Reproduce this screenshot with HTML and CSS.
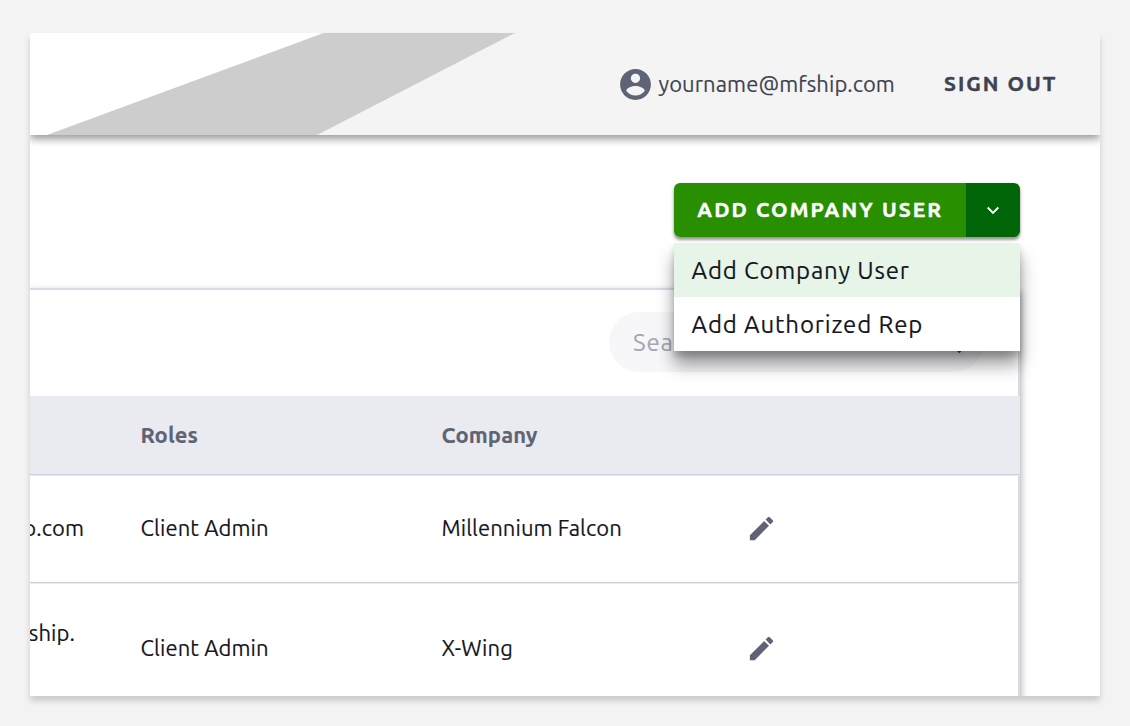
FILE: index.html
```html
<!DOCTYPE html>
<html lang="en">
<head>
<meta charset="UTF-8">
<meta name="viewport" content="width=device-width, initial-scale=1.0"/>
<title>Company Users</title>
<link rel="stylesheet" href="styles.css">
</head>
<body>
<div class="frame">
  <header class="header">
    <svg class="header-bg" viewBox="0 0 1070 102" width="1070" height="102">
      <polygon points="0,0 293.500,0 17,102 0,102" fill="#fff"/>
      <polygon points="293.500,0 485,0 287,102 17,102" fill="#cdcdcd"/>
    </svg>
    <div class="account">
      <svg width="37" height="37" viewBox="0 0 24 24" fill="#5e6475"><path d="M12 2C6.480 2 2 6.480 2 12s4.480 10 10 10 10-4.480 10-10S17.520 2 12 2zm0 3c1.660 0 3 1.340 3 3s-1.340 3-3 3-3-1.340-3-3 1.340-3 3-3zm0 14.200c-2.500 0-4.710-1.280-6-3.220.030-1.990 4-3.080 6-3.080 1.990 0 5.970 1.090 6 3.080-1.290 1.940-3.500 3.220-6 3.220z"/></svg>
      <span class="email">yourname@mfship.com</span>
    </div>
    <a class="sign-out">SIGN OUT</a>
  </header>

  <main class="main">
    <div class="actions">
      <div class="split-button">
        <button class="add">ADD COMPANY USER</button>
        <button class="toggle"><svg width="14" height="9" viewBox="0 0 14 9"><path d="M1.700 1.500 7 6.800l5.300-5.300" fill="none" stroke="#fff" stroke-width="1.900"/></svg></button>
        <div class="menu">
          <div class="menu-item active">Add Company User</div>
          <div class="menu-item">Add Authorized Rep</div>
        </div>
      </div>
    </div>

    <section class="card">
      <div class="toolbar">
        <div class="search">
          <span>Search</span>
          <svg width="32" height="32" viewBox="0 0 24 24" fill="#3f4350"><path d="M15.500 14h-.79l-.28-.27A6.470 6.470 0 0 0 16 9.500 6.500 6.500 0 1 0 9.500 16c1.610 0 3.090-.59 4.230-1.570l.27.28v.79l5 4.990L20.490 19l-4.990-5zm-6 0C7.010 14 5 11.990 5 9.500S7.010 5 9.500 5 14 7.010 14 9.500 11.990 14 9.500 14z"/></svg>
        </div>
      </div>
      <div class="row head">
        <div class="cell cell-email"></div>
        <div class="cell cell-roles">Roles</div>
        <div class="cell cell-company">Company</div>
      </div>
      <div class="row short">
        <div class="cell cell-email">p.com</div>
        <div class="cell cell-roles">Client Admin</div>
        <div class="cell cell-company">Millennium Falcon</div>
        <div class="cell cell-edit"><svg width="31" height="31" viewBox="0 0 24 24" fill="#5e6475"><path d="M3 17.250V21h3.750L17.810 9.940l-3.750-3.750L3 17.250zM20.710 7.040a1 1 0 0 0 0-1.410l-2.340-2.340a1 1 0 0 0-1.410 0l-1.830 1.830 3.750 3.750 1.830-1.830z"/></svg></div>
      </div>
      <div class="row tall">
        <div class="cell cell-email wrapped">ship.</div>
        <div class="cell cell-roles">Client Admin</div>
        <div class="cell cell-company">X-Wing</div>
        <div class="cell cell-edit"><svg width="31" height="31" viewBox="0 0 24 24" fill="#5e6475"><path d="M3 17.250V21h3.750L17.810 9.940l-3.750-3.750L3 17.250zM20.710 7.040a1 1 0 0 0 0-1.410l-2.340-2.340a1 1 0 0 0-1.410 0l-1.830 1.830 3.750 3.750 1.830-1.830z"/></svg></div>
      </div>
    </section>
  </main>
</div>
</body>
</html>
```
FILE: styles.css
```css
/* ---------- GLOBAL ---------- */
*{box-sizing:border-box;}
html,body{margin:0;padding:0;height:726px;overflow:hidden;background:#f3f3f3;color:#15171f;font-family:Ubuntu,"Noto Sans",sans-serif;-webkit-text-stroke:.15px;}
svg{display:block;flex:none;}

.frame{width:1070px;height:663px;margin:33px 0 0 30px;display:flex;flex-direction:column;background:#fff;box-shadow:0 5px 6px rgba(0,0,0,.17);}

/* ---------- HEADER ---------- */
.header{position:relative;z-index:1;flex:none;height:102px;padding-right:42px;display:flex;align-items:center;justify-content:flex-end;background:#f4f4f4;box-shadow:0 4px 8px rgba(0,0,0,.4);clip-path:inset(0 0 -20px 0);}
.header-bg{position:absolute;left:0;top:0;}
.account{display:flex;align-items:center;gap:5px;margin-right:48px;color:#3f4350;}
.email{width:237.500px;font-size:22px;letter-spacing:.07px;line-height:28px;white-space:nowrap;}
.sign-out{width:114px;padding-bottom:2px;font-size:21px;font-weight:700;letter-spacing:2px;line-height:26px;white-space:nowrap;color:#3f4350;-webkit-text-stroke:.4px;}

/* ---------- MAIN ---------- */
.main{flex:1;min-height:0;overflow:hidden;padding:48px 80px 0 0;}
.actions{display:flex;justify-content:flex-end;}
.split-button{position:relative;z-index:2;display:flex;width:346.500px;height:54px;border-radius:6px;box-shadow:0 3px 3px rgba(0,0,0,.35),0 1px 4px rgba(0,0,0,.15);}
.split-button button{border:0;padding:0;font-family:inherit;color:#fff;}
.split-button .add{flex:1;padding:0 0 2px 1px;border-radius:6px 0 0 6px;background:#278f00;font-size:21px;font-weight:700;letter-spacing:2.100px;white-space:nowrap;-webkit-text-stroke:.4px;}
.toggle{width:54px;border-radius:0 6px 6px 0;background:#006607;display:flex;align-items:center;justify-content:center;}

.menu{position:absolute;top:60px;left:0;right:0;box-shadow:0 14px 16px rgba(0,0,0,.38),0 5px 6px rgba(0,0,0,.18);clip-path:inset(0 -30px -40px -30px);}
.menu-item{height:54px;padding-left:18px;display:flex;align-items:center;background:#fff;font-size:24px;letter-spacing:.85px;white-space:nowrap;}
.menu-item.active{background:#e7f5e8;}

/* ---------- TABLE ---------- */
.card{margin-top:51px;height:500px;border-top:2px solid #d9dae6;border-right:2px solid #d9dae6;box-shadow:0 4px 8px rgba(0,0,0,.4);}
.toolbar{height:106px;padding:22px 34px 0 0;display:flex;justify-content:flex-end;}
.search{width:375px;height:60px;padding:0 18px 0 24px;border-radius:30px;display:flex;align-items:center;justify-content:space-between;background:#f7f7fa;color:#a4a7b5;font-size:24px;letter-spacing:.8px;}

.row{height:108px;display:flex;align-items:center;box-shadow:inset 0 -1px #e9eaf1,inset 0 -2px #cfd0df;font-size:22px;letter-spacing:.1px;}
.row.head{height:80px;margin-right:-2px;background:#eaebf0;color:#5e6475;font-weight:700;}
.row.short{padding-bottom:2px;}
.row.tall{height:130px;}
.cell{flex:none;white-space:nowrap;line-height:26px;padding-bottom:2px;}
.cell-email{width:54px;margin-right:56.500px;display:flex;justify-content:flex-end;}
.cell-email.wrapped{height:62px;line-height:30px;padding-right:9px;}
.cell-roles{width:301px;}
.cell-company{width:304.500px;}
```
